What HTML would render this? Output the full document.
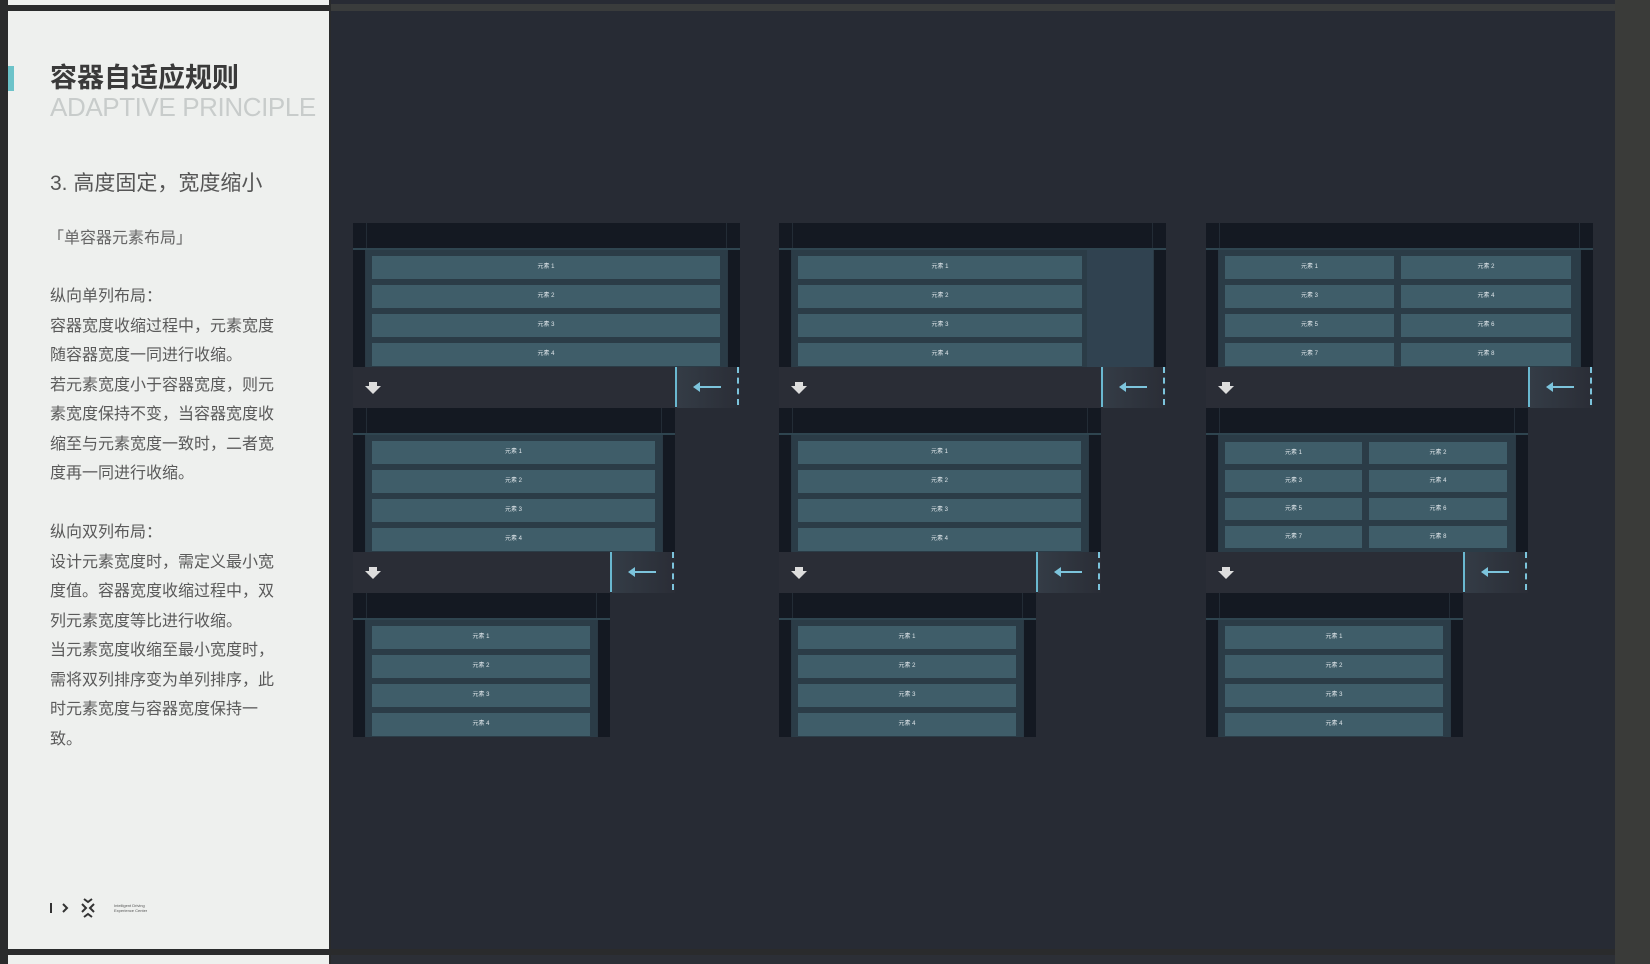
<!DOCTYPE html>
<html><head><meta charset="utf-8">
<style>
*{margin:0;padding:0;box-sizing:border-box}
body{width:1650px;height:964px;background:#2a2b2c;position:relative;overflow:hidden;font-family:"Liberation Sans","Noto Sans CJK SC",sans-serif}
.abs{position:absolute}
#left{left:8px;top:11px;width:321px;height:938px;background:#eef0ee}
#main{left:331px;top:11px;width:1284px;height:938px;background:#272b34}
.card{position:absolute;height:144px}
.hd{position:absolute;left:0;right:0;top:0;height:25px;background:#141922}
.hd::before{content:"";position:absolute;left:13px;top:0;bottom:0;width:1px;background:#232c36}
.hd::after{content:"";position:absolute;right:13px;top:0;bottom:0;width:1px;background:#232c36}
.bd{position:absolute;left:0;right:0;top:25px;height:119px;background:#2b3c47;border-top:2px solid #2f4550;overflow:hidden}
.ls{position:absolute;left:0;top:0;bottom:0;width:13px;background:#141922;border-right:1px solid #2a3944}
.rs{position:absolute;right:0;top:0;bottom:0;width:13px;background:#141922;border-left:1px solid #2a3944}
.it{position:absolute;height:23px;background:#3f5d69;color:#dfe6ea;font-size:6px;text-align:center;line-height:23px}
.bar{position:absolute;height:41px;background:#2a2d36}
.dv{position:absolute;top:0;width:2px;height:40px;background:#6ab8d0}
.ar{position:absolute;top:0;height:41px;width:63px;background:linear-gradient(90deg,#343c46,#2a2d36)}
.ds{position:absolute;top:0;height:38px;border-left:2px dashed #7cc4dc}
.dn{position:absolute;left:12px;top:15px}
.txt{left:50px;color:#5a5a5a;font-size:16px;line-height:29.5px}
</style></head><body>
<div class="abs" style="left:8px;top:0;width:321px;height:5px;background:#eef0ee"></div>
<div class="abs" style="left:331px;top:0;width:1284px;height:4px;background:#282b34"></div>
<div class="abs" style="left:331px;top:4px;width:1284px;height:7px;background:#3a3c3c"></div>
<div class="abs" style="left:1615px;top:0;width:35px;height:964px;background:#3a3b39"></div>
<div class="abs" style="left:8px;top:955px;width:321px;height:9px;background:#eef0ee"></div>
<div class="abs" style="left:331px;top:955px;width:1284px;height:9px;background:#2c2f36"></div>
<div id="left" class="abs"></div>
<div id="main" class="abs"></div>

<div class="abs" style="left:8px;top:66px;width:6px;height:25px;background:#6cc3c9"></div>
<div class="abs" style="left:50px;top:62px;font-size:27px;font-weight:bold;color:#3a3a3a;line-height:32px">容器自适应规则</div>
<div class="abs" style="left:50px;top:92px;font-size:26px;color:#c8cccb;line-height:30px;letter-spacing:-0.4px">ADAPTIVE PRINCIPLE</div>
<div class="abs" style="left:50px;top:171px;font-size:21px;color:#555;line-height:26px">3. 高度固定，宽度缩小</div>
<div class="abs" style="left:48px;top:229px;font-size:16px;color:#666;line-height:20px">「单容器元素布局」</div>
<div class="abs txt" style="top:282px">纵向单列布局：<br>容器宽度收缩过程中，元素宽度<br>随容器宽度一同进行收缩。<br>若元素宽度小于容器宽度，则元<br>素宽度保持不变，当容器宽度收<br>缩至与元素宽度一致时，二者宽<br>度再一同进行收缩。<br><br>纵向双列布局：<br>设计元素宽度时，需定义最小宽<br>度值。容器宽度收缩过程中，双<br>列元素宽度等比进行收缩。<br>当元素宽度收缩至最小宽度时，<br>需将双列排序变为单列排序，此<br>时元素宽度与容器宽度保持一<br>致。</div>

<svg class="abs" style="left:46px;top:896px" width="110" height="24" viewBox="0 0 110 24">
<rect x="4" y="7" width="2" height="10" fill="#333"/>
<path d="M17 8 L21 12 L17 16" stroke="#333" stroke-width="2" fill="none"/>
<path d="M36 8 L40 12 L36 16 M48 8 L44 12 L48 16 M38 3 L42 6 L46 3 M38 21 L42 18 L46 21" stroke="#333" stroke-width="2" fill="none"/>
<text x="68" y="11" font-size="4" fill="#555" font-family="Liberation Sans">Intelligent Driving</text>
<text x="68" y="16" font-size="4" fill="#555" font-family="Liberation Sans">Experience Center</text>
</svg>

<!-- COLUMN 1 -->
<div class="card" style="left:353px;top:223px;width:387px"><div class="hd"></div><div class="bd"><div class="ls"></div><div class="rs"></div>
<div class="it" style="left:19px;top:6px;width:348px">元素 1</div><div class="it" style="left:19px;top:35px;width:348px">元素 2</div><div class="it" style="left:19px;top:64px;width:348px">元素 3</div><div class="it" style="left:19px;top:93px;width:348px">元素 4</div></div></div>
<div class="bar" style="left:353px;top:367px;width:387px"><svg class="dn" width="16" height="12"><path d="M4 0h8v4h4l-8 8l-8-8h4z" fill="#ddd"/></svg><div class="ar" style="left:324px"></div><div class="dv" style="left:322px"></div><svg class="abs" style="left:340px;top:14px" width="30" height="12"><path d="M2 6h26" stroke="#7cc4dc" stroke-width="2"/><path d="M0 6l7-5v10z" fill="#7cc4dc"/></svg><div class="ds" style="left:384px"></div></div>

<div class="card" style="left:353px;top:408px;width:322px"><div class="hd"></div><div class="bd"><div class="ls"></div><div class="rs"></div>
<div class="it" style="left:19px;top:6px;width:283px">元素 1</div><div class="it" style="left:19px;top:35px;width:283px">元素 2</div><div class="it" style="left:19px;top:64px;width:283px">元素 3</div><div class="it" style="left:19px;top:93px;width:283px">元素 4</div></div></div>
<div class="bar" style="left:353px;top:552px;width:322px"><svg class="dn" width="16" height="12"><path d="M4 0h8v4h4l-8 8l-8-8h4z" fill="#ddd"/></svg><div class="ar" style="left:259px"></div><div class="dv" style="left:257px"></div><svg class="abs" style="left:275px;top:14px" width="30" height="12"><path d="M2 6h26" stroke="#7cc4dc" stroke-width="2"/><path d="M0 6l7-5v10z" fill="#7cc4dc"/></svg><div class="ds" style="left:319px"></div></div>

<div class="card" style="left:353px;top:593px;width:257px"><div class="hd"></div><div class="bd"><div class="ls"></div><div class="rs"></div>
<div class="it" style="left:19px;top:6px;width:218px">元素 1</div><div class="it" style="left:19px;top:35px;width:218px">元素 2</div><div class="it" style="left:19px;top:64px;width:218px">元素 3</div><div class="it" style="left:19px;top:93px;width:218px">元素 4</div></div></div>

<!-- COLUMN 2 -->
<div class="card" style="left:779px;top:223px;width:387px"><div class="hd"></div><div class="bd"><div class="ls"></div><div class="rs"></div>
<div class="abs" style="left:308px;top:0;width:66px;height:119px;background:#304250"></div>
<div class="it" style="left:19px;top:6px;width:284px">元素 1</div><div class="it" style="left:19px;top:35px;width:284px">元素 2</div><div class="it" style="left:19px;top:64px;width:284px">元素 3</div><div class="it" style="left:19px;top:93px;width:284px">元素 4</div></div></div>
<div class="bar" style="left:779px;top:367px;width:387px"><svg class="dn" width="16" height="12"><path d="M4 0h8v4h4l-8 8l-8-8h4z" fill="#ddd"/></svg><div class="ar" style="left:324px"></div><div class="dv" style="left:322px"></div><svg class="abs" style="left:340px;top:14px" width="30" height="12"><path d="M2 6h26" stroke="#7cc4dc" stroke-width="2"/><path d="M0 6l7-5v10z" fill="#7cc4dc"/></svg><div class="ds" style="left:384px"></div></div>

<div class="card" style="left:779px;top:408px;width:322px"><div class="hd"></div><div class="bd"><div class="ls"></div><div class="rs"></div>
<div class="it" style="left:19px;top:6px;width:283px">元素 1</div><div class="it" style="left:19px;top:35px;width:283px">元素 2</div><div class="it" style="left:19px;top:64px;width:283px">元素 3</div><div class="it" style="left:19px;top:93px;width:283px">元素 4</div></div></div>
<div class="bar" style="left:779px;top:552px;width:322px"><svg class="dn" width="16" height="12"><path d="M4 0h8v4h4l-8 8l-8-8h4z" fill="#ddd"/></svg><div class="ar" style="left:259px"></div><div class="dv" style="left:257px"></div><svg class="abs" style="left:275px;top:14px" width="30" height="12"><path d="M2 6h26" stroke="#7cc4dc" stroke-width="2"/><path d="M0 6l7-5v10z" fill="#7cc4dc"/></svg><div class="ds" style="left:319px"></div></div>

<div class="card" style="left:779px;top:593px;width:257px"><div class="hd"></div><div class="bd"><div class="ls"></div><div class="rs"></div>
<div class="it" style="left:19px;top:6px;width:218px">元素 1</div><div class="it" style="left:19px;top:35px;width:218px">元素 2</div><div class="it" style="left:19px;top:64px;width:218px">元素 3</div><div class="it" style="left:19px;top:93px;width:218px">元素 4</div></div></div>

<!-- COLUMN 3 -->
<div class="card" style="left:1206px;top:223px;width:387px"><div class="hd"></div><div class="bd"><div class="ls"></div><div class="rs"></div>
<div class="it" style="left:19px;top:6px;width:169px">元素 1</div><div class="it" style="left:195px;top:6px;width:170px">元素 2</div>
<div class="it" style="left:19px;top:35px;width:169px">元素 3</div><div class="it" style="left:195px;top:35px;width:170px">元素 4</div>
<div class="it" style="left:19px;top:64px;width:169px">元素 5</div><div class="it" style="left:195px;top:64px;width:170px">元素 6</div>
<div class="it" style="left:19px;top:93px;width:169px">元素 7</div><div class="it" style="left:195px;top:93px;width:170px">元素 8</div></div></div>
<div class="bar" style="left:1206px;top:367px;width:387px"><svg class="dn" width="16" height="12"><path d="M4 0h8v4h4l-8 8l-8-8h4z" fill="#ddd"/></svg><div class="ar" style="left:324px"></div><div class="dv" style="left:322px"></div><svg class="abs" style="left:340px;top:14px" width="30" height="12"><path d="M2 6h26" stroke="#7cc4dc" stroke-width="2"/><path d="M0 6l7-5v10z" fill="#7cc4dc"/></svg><div class="ds" style="left:384px"></div></div>

<div class="card" style="left:1206px;top:408px;width:322px"><div class="hd"></div><div class="bd"><div class="ls"></div><div class="rs"></div>
<div class="it" style="left:19px;top:7px;width:137px;height:22px;line-height:22px">元素 1</div><div class="it" style="left:163px;top:7px;width:138px;height:22px;line-height:22px">元素 2</div>
<div class="it" style="left:19px;top:35px;width:137px;height:22px;line-height:22px">元素 3</div><div class="it" style="left:163px;top:35px;width:138px;height:22px;line-height:22px">元素 4</div>
<div class="it" style="left:19px;top:63px;width:137px;height:22px;line-height:22px">元素 5</div><div class="it" style="left:163px;top:63px;width:138px;height:22px;line-height:22px">元素 6</div>
<div class="it" style="left:19px;top:91px;width:137px;height:22px;line-height:22px">元素 7</div><div class="it" style="left:163px;top:91px;width:138px;height:22px;line-height:22px">元素 8</div></div></div>
<div class="bar" style="left:1206px;top:552px;width:322px"><svg class="dn" width="16" height="12"><path d="M4 0h8v4h4l-8 8l-8-8h4z" fill="#ddd"/></svg><div class="ar" style="left:259px"></div><div class="dv" style="left:257px"></div><svg class="abs" style="left:275px;top:14px" width="30" height="12"><path d="M2 6h26" stroke="#7cc4dc" stroke-width="2"/><path d="M0 6l7-5v10z" fill="#7cc4dc"/></svg><div class="ds" style="left:319px"></div></div>

<div class="card" style="left:1206px;top:593px;width:257px"><div class="hd"></div><div class="bd"><div class="ls"></div><div class="rs"></div>
<div class="it" style="left:19px;top:6px;width:218px">元素 1</div><div class="it" style="left:19px;top:35px;width:218px">元素 2</div><div class="it" style="left:19px;top:64px;width:218px">元素 3</div><div class="it" style="left:19px;top:93px;width:218px">元素 4</div></div></div>

</body></html>
